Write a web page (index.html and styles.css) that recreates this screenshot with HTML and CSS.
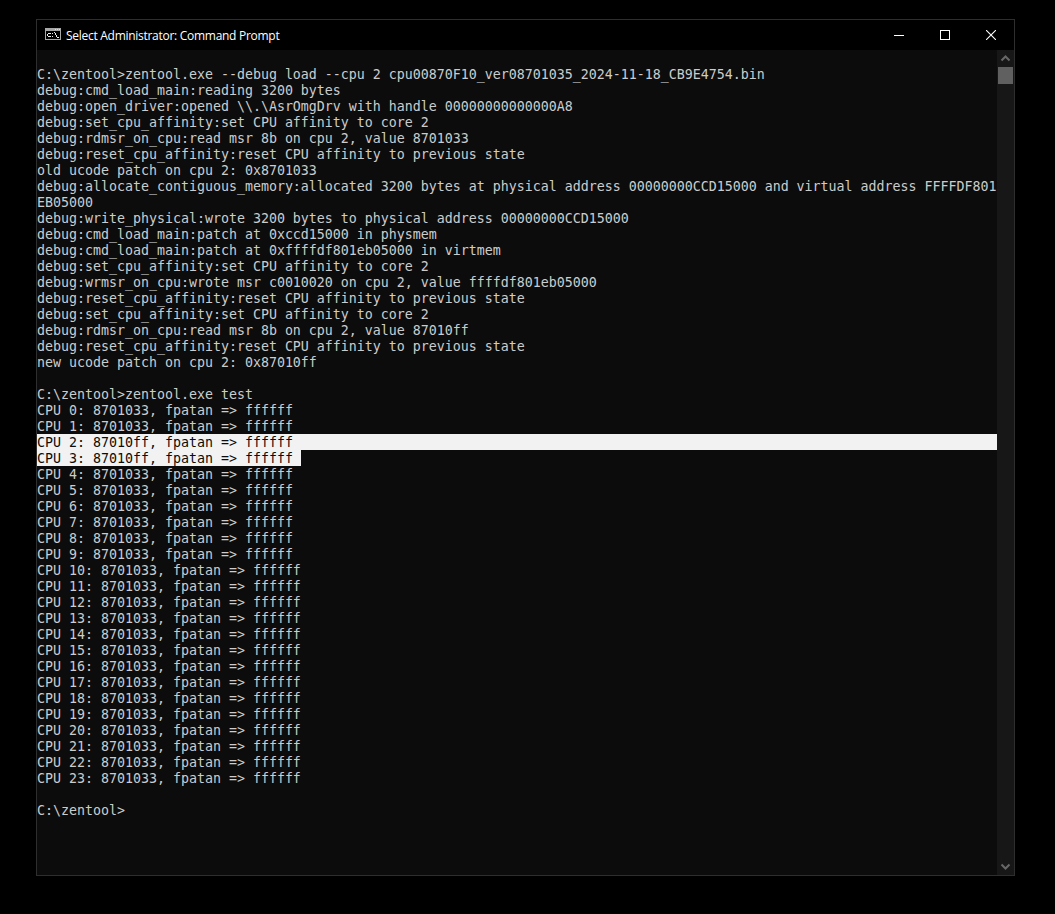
FILE: index.html
```html
<!DOCTYPE html>
<html lang="en">
<head>
<meta charset="utf-8">
<title>Select Administrator: Command Prompt</title>
<link rel="stylesheet" href="styles.css">
</head>
<body>
<div class="window">
  <header class="titlebar">
    <svg class="app-icon" width="16" height="12" viewBox="0 0 16 12" shape-rendering="crispEdges">
      <rect x="0" y="0" width="16" height="12" fill="#a8a8a8"/>
      <rect x="1" y="3" width="14" height="8" fill="#000"/>
      <rect x="10" y="1" width="1" height="1" fill="#e0e0e0"/>
      <rect x="12" y="1" width="1" height="1" fill="#e0e0e0"/>
      <rect x="14" y="1" width="1" height="1" fill="#e0e0e0"/>
      <path d="M3 5h3v1H3zM2 6h1v2H2zM3 8h3v1H3zM7 5h1v1H7zM7 8h1v1H7zM9 4h1v1H9zM10 5h1v2H10zM11 7h1v2H11zM12 9h2v1H12z" fill="#f0f0f0"/>
    </svg>
    <span class="title">Select Administrator: Command Prompt</span>
    <div class="controls">
      <div class="control">
        <svg width="10" height="10" viewBox="0 0 10 10"><rect x="0" y="5" width="10" height="1" fill="#fff"/></svg>
      </div>
      <div class="control">
        <svg width="10" height="10" viewBox="0 0 10 10"><rect x="0.5" y="0.5" width="9" height="9" fill="none" stroke="#fff"/></svg>
      </div>
      <div class="control">
        <svg width="10" height="10" viewBox="0 0 10 10"><path d="M0 0L10 10M10 0L0 10" fill="none" stroke="#fff" stroke-width="1.1"/></svg>
      </div>
    </div>
  </header>
  <div class="body">
    <div class="console">
<pre class="text"> 
C:\zentool&gt;zentool.exe --debug load --cpu 2 cpu00870F10_ver08701035_2024-11-18_CB9E4754.bin
debug:cmd_load_main:reading 3200 bytes
debug:open_driver:opened \\.\AsrOmgDrv with handle 00000000000000A8
debug:set_cpu_affinity:set CPU affinity to core 2
debug:rdmsr_on_cpu:read msr 8b on cpu 2, value 8701033
debug:reset_cpu_affinity:reset CPU affinity to previous state
old ucode patch on cpu 2: 0x8701033
debug:allocate_contiguous_memory:allocated 3200 bytes at physical address 00000000CCD15000 and virtual address FFFFDF801
EB05000
debug:write_physical:wrote 3200 bytes to physical address 00000000CCD15000
debug:cmd_load_main:patch at 0xccd15000 in physmem
debug:cmd_load_main:patch at 0xffffdf801eb05000 in virtmem
debug:set_cpu_affinity:set CPU affinity to core 2
debug:wrmsr_on_cpu:wrote msr c0010020 on cpu 2, value ffffdf801eb05000
debug:reset_cpu_affinity:reset CPU affinity to previous state
debug:set_cpu_affinity:set CPU affinity to core 2
debug:rdmsr_on_cpu:read msr 8b on cpu 2, value 87010ff
debug:reset_cpu_affinity:reset CPU affinity to previous state
new ucode patch on cpu 2: 0x87010ff

C:\zentool&gt;zentool.exe test
CPU 0: 8701033, fpatan =&gt; ffffff
CPU 1: 8701033, fpatan =&gt; ffffff
<span class="sel sel-full">CPU 2: 87010ff, fpatan =&gt; ffffff</span><span class="sel sel-part">CPU 3: 87010ff, fpatan =&gt; ffffff </span>CPU 4: 8701033, fpatan =&gt; ffffff
CPU 5: 8701033, fpatan =&gt; ffffff
CPU 6: 8701033, fpatan =&gt; ffffff
CPU 7: 8701033, fpatan =&gt; ffffff
CPU 8: 8701033, fpatan =&gt; ffffff
CPU 9: 8701033, fpatan =&gt; ffffff
CPU 10: 8701033, fpatan =&gt; ffffff
CPU 11: 8701033, fpatan =&gt; ffffff
CPU 12: 8701033, fpatan =&gt; ffffff
CPU 13: 8701033, fpatan =&gt; ffffff
CPU 14: 8701033, fpatan =&gt; ffffff
CPU 15: 8701033, fpatan =&gt; ffffff
CPU 16: 8701033, fpatan =&gt; ffffff
CPU 17: 8701033, fpatan =&gt; ffffff
CPU 18: 8701033, fpatan =&gt; ffffff
CPU 19: 8701033, fpatan =&gt; ffffff
CPU 20: 8701033, fpatan =&gt; ffffff
CPU 21: 8701033, fpatan =&gt; ffffff
CPU 22: 8701033, fpatan =&gt; ffffff
CPU 23: 8701033, fpatan =&gt; ffffff

C:\zentool&gt;</pre>
    </div>
    <aside class="scrollbar">
      <svg class="arrow" width="17" height="17" viewBox="0 0 17 17"><path d="M4.5 10.5L8.5 6.5L12.5 10.5" fill="none" stroke="#676767" stroke-width="2"/></svg>
      <div class="thumb"></div>
      <div class="track"></div>
      <svg class="arrow" width="17" height="17" viewBox="0 0 17 17"><path d="M4.5 6.5L8.5 10.5L12.5 6.5" fill="none" stroke="#676767" stroke-width="2"/></svg>
    </aside>
  </div>
</div>
</body>
</html>
```
FILE: styles.css
```css
html, body {
  margin: 0;
  padding: 0;
  background: #000;
  overflow: hidden;
}
body {
  padding: 19px 0 0 36px;
  height: 914px;
  box-sizing: border-box;
}
.window {
  width: 979px;
  height: 857px;
  box-sizing: border-box;
  border: 1px solid #2e2e2e;
  display: flex;
  flex-direction: column;
  background: #0c0c0c;
}
.titlebar {
  height: 30px;
  flex: none;
  background: #000;
  display: flex;
  align-items: center;
  padding-left: 8px;
}
.app-icon {
  flex: none;
  margin-right: 5px;
  margin-bottom: 2px;
}
.title {
  font: 12px "Open Sans", "Noto Sans", sans-serif;
  letter-spacing: -0.28px;
  color: #fff;
  white-space: nowrap;
}
.controls {
  margin-left: auto;
  display: flex;
}
.control {
  width: 46px;
  height: 30px;
  display: flex;
  align-items: center;
  justify-content: center;
}
.body {
  flex: 1;
  display: flex;
  min-height: 0;
}
.console {
  flex: 1;
  min-width: 0;
  overflow: hidden;
}
.text {
  margin: 1px 0 0;
  font-family: "DejaVu Sans Mono", monospace;
  font-size: 13.29px;
  line-height: 16px;
  color: #cccccc;
  white-space: pre;
}
.sel {
  display: block;
  height: 15px;
  padding-top: 1px;
  background: #f2f2f2;
  color: #0c0c0c;
}
.sel-full {
  margin-top: -1px;
}
.sel-part {
  width: 264px;
  margin-bottom: 1px;
}
.scrollbar {
  width: 17px;
  flex: none;
  background: #171717;
  display: flex;
  flex-direction: column;
  align-items: center;
}
.arrow {
  flex: none;
}
.thumb {
  width: 15px;
  height: 17px;
  flex: none;
  background: #606060;
}
.track {
  flex: 1;
}
```
